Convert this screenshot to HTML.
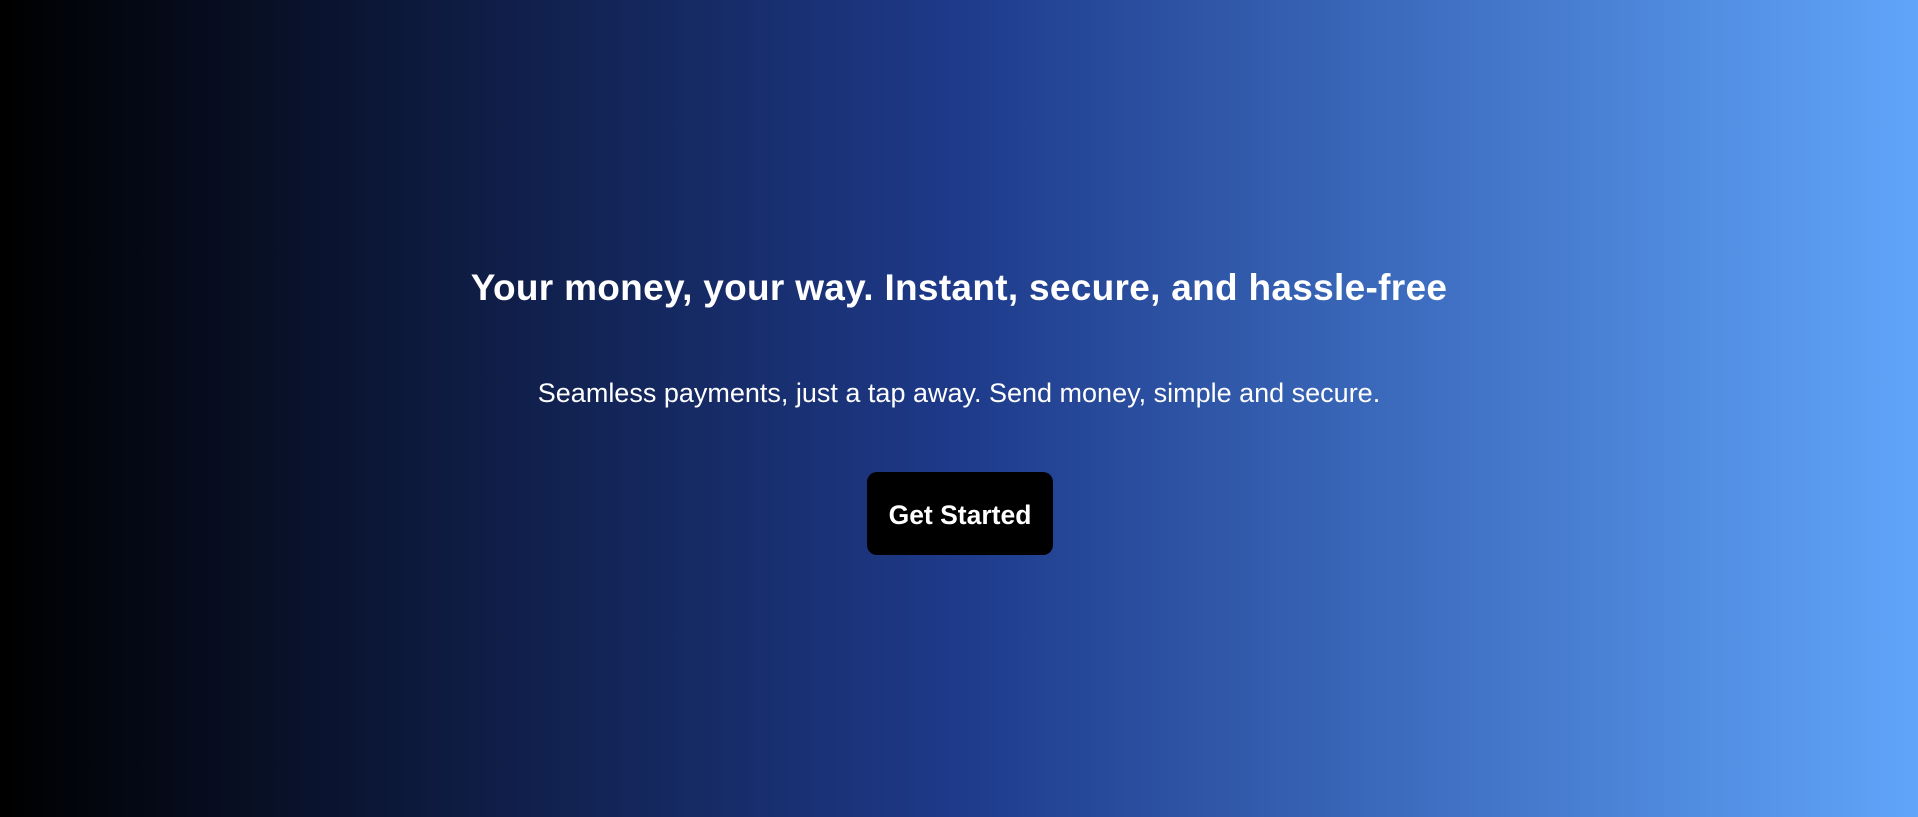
<!DOCTYPE html>
<html>
<head>
<meta charset="utf-8">
<style>
  html,body{margin:0;padding:0;}
  body{
    width:1918px;height:817px;overflow:hidden;
    background:linear-gradient(to right,#000000 0%,#1e3a8a 50%,#60a5fa 100%);
    font-family:"Liberation Sans",sans-serif;color:#fff;
    position:relative;
  }
  h1{
    position:absolute;left:0;right:0;top:265px;margin:0;
    text-align:center;font-size:37px;font-weight:bold;line-height:46px;letter-spacing:0.3px;
  }
  p{
    position:absolute;left:0;right:0;top:376px;margin:0;
    text-align:center;font-size:27px;line-height:34px;
  }
  .btn{
    position:absolute;left:867px;top:472px;width:186px;height:83px;
    background:#000;border-radius:10px;
    display:flex;align-items:center;justify-content:center;
    font-size:26.5px;font-weight:bold;padding-top:4px;box-sizing:border-box;
  }
</style>
</head>
<body>
  <h1>Your money, your way. Instant, secure, and hassle-free</h1>
  <p>Seamless payments, just a tap away. Send money, simple and secure.</p>
  <div class="btn">Get Started</div>
</body>
</html>
